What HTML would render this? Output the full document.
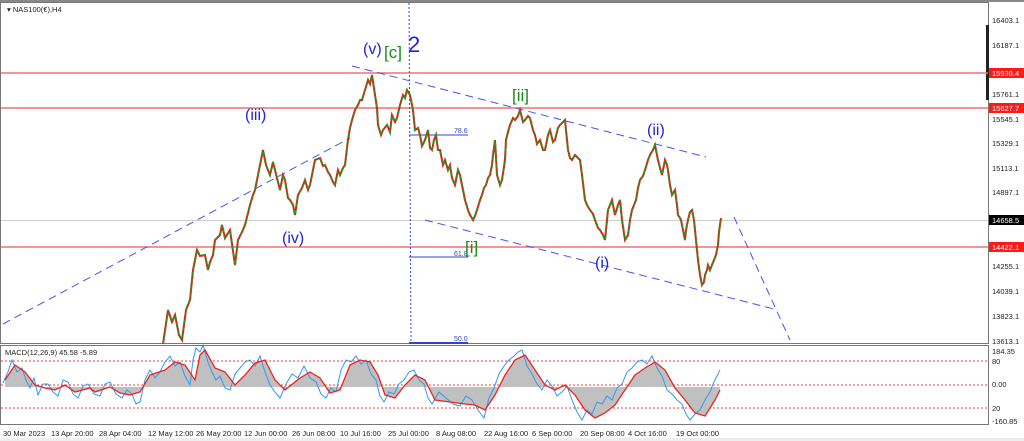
<!DOCTYPE html>
<html><head><meta charset="utf-8"><style>
html,body{margin:0;padding:0;background:#fff;width:1024px;height:441px;overflow:hidden}
svg{display:block;font-family:"Liberation Sans",sans-serif}
</style></head><body>
<svg width="1024" height="441" viewBox="0 0 1024 441">
<defs>
<polyline id="pr" fill="none" points="163,344 168,310 172,322 175,315 179,335 182,340 186,310 190,300 193,270 197,250 200,256 205,255 208,270 210,262 213,255 215,240 220,235 222,225 225,238 230,230 235,265 238,240 242,232 245,225 250,205 253,195 255,190 258,175 260,165 263,150 266,165 270,175 273,162 275,170 280,190 283,175 285,180 288,198 290,200 293,205 295,215 298,195 302,188 305,180 308,190 310,185 313,170 315,160 320,158 323,166 325,165 328,172 330,175 333,182 335,185 338,170 340,175 343,168 345,165 348,140 350,128 352,120 355,110 358,105 360,100 362,100 365,90 368,80 370,84 372,75 375,95 377,108 378,125 381,135 383,130 387,125 390,132 392,115 395,122 397,118 400,105 403,95 405,98 407,90 410,95 413,110 415,130 418,128 420,135 422,146 425,140 428,130 430,148 432,150 434,140 436,135 438,150 440,150 443,165 445,160 448,170 450,165 452,178 455,185 458,170 460,175 463,190 465,200 468,210 470,215 473,220 475,216 477,210 480,200 482,195 484,188 486,185 488,178 490,175 492,165 493,155 495,140 497,175 500,185 502,180 505,160 506,140 508,132 510,125 513,118 515,120 518,116 520,110 523,122 525,120 528,116 530,118 533,130 535,135 537,144 540,140 543,150 545,150 548,135 550,130 553,142 555,140 558,128 560,125 563,122 565,120 567,140 568,150 570,158 572,160 575,155 578,158 580,160 582,175 585,200 587,205 590,210 593,214 595,220 598,228 600,230 603,235 605,240 607,220 608,210 610,205 612,200 614,210 615,215 618,205 620,200 622,220 625,240 628,235 630,220 632,210 634,205 636,200 638,188 640,180 643,176 645,170 648,160 650,155 653,150 655,145 657,155 658,160 660,168 662,175 664,165 665,160 667,165 668,170 670,185 672,195 675,190 677,205 678,215 680,218 681,220 683,230 685,240 686,230 688,220 690,212 692,210 694,220 695,230 697,250 698,260 700,275 702,285 704,282 705,275 707,270 708,265 710,270 712,265 714,260 716,255 718,245 719,232 721,218"/>
</defs>
<rect width="1024" height="441" fill="#fff"/>
<rect x="0" y="0" width="1024" height="2" fill="#888"/>
<rect x="0.5" y="2.5" width="988" height="341" fill="none" stroke="#777"/>
<rect x="0.5" y="345.5" width="988" height="79" fill="none" stroke="#777"/>
<rect x="986" y="25" width="3" height="75" fill="#222"/>
<line x1="1" y1="73" x2="988" y2="73" stroke="#f07070" stroke-width="1.5"/>
<line x1="1" y1="108" x2="988" y2="108" stroke="#f07070" stroke-width="1.5"/>
<line x1="1" y1="247" x2="988" y2="247" stroke="#f07070" stroke-width="1.5"/>
<line x1="1" y1="220.5" x2="988" y2="220.5" stroke="#ccc"/>
<line x1="409" y1="3" x2="411" y2="344" stroke="#3344ee" stroke-dasharray="2 2"/>
<g stroke="#3344cc" stroke-width="1"><line x1="409" y1="135" x2="468" y2="135"/><line x1="409" y1="257" x2="468" y2="257"/><line x1="409" y1="343" x2="468" y2="343" stroke-width="2"/></g>
<g font-size="7" fill="#3344cc"><text x="454" y="133">78.6</text><text x="454" y="256">61.8</text><text x="454" y="341">50.0</text></g>
<g stroke="#4455ee" stroke-width="1" stroke-dasharray="8 5" fill="none">
<line x1="3" y1="324" x2="350" y2="138"/>
<line x1="352" y1="66" x2="706" y2="157"/>
<line x1="425" y1="220" x2="778" y2="310"/>
<line x1="734" y1="217" x2="790" y2="340"/>
</g>
<use href="#pr" stroke="#d8261a" stroke-width="2"/>
<use href="#pr" stroke="#1f9a1f" stroke-width="2" stroke-dasharray="3 4"/>
<g font-size="16" fill="#2222dd">
<text x="363" y="54">(v)</text>
<text x="245" y="120">(iii)</text>
<text x="282" y="243">(iv)</text>
<text x="647" y="135">(ii)</text>
<text x="595" y="268">(i)</text>
<text x="408" y="52" font-size="22">2</text>
</g>
<g font-size="17" fill="#1a8a1a">
<text x="384" y="58">[c]</text>
<text x="512" y="101">[ii]</text>
<text x="465" y="253">[i]</text>
</g>
<text x="7" y="12" font-size="7.5" fill="#222">▾ NAS100(€),H4</text>
<line x1="1" y1="361" x2="988" y2="361" stroke="#f04040" stroke-dasharray="2 2"/>
<line x1="1" y1="385" x2="988" y2="385" stroke="#f04040" stroke-dasharray="2 2"/>
<line x1="1" y1="408" x2="988" y2="408" stroke="#f04040" stroke-dasharray="2 2"/>
<polygon fill="#c0c0c0" points="5,387 5,380 15,365 25,372 35,385 45,388 55,390 65,385 75,392 90,388 95,392 110,387 120,393 130,395 140,392 150,375 165,370 175,362 185,365 195,380 200,355 205,350 215,368 225,372 235,385 245,375 255,363 265,360 275,380 285,390 300,378 310,372 320,378 330,393 340,390 350,365 360,360 370,362 378,375 385,395 395,398 405,385 415,375 425,380 435,400 450,402 465,404 475,405 485,410 495,395 505,375 515,360 525,355 535,370 545,385 555,390 565,385 575,395 585,410 595,418 605,413 615,405 625,390 635,375 645,368 655,362 665,370 675,388 685,400 695,413 705,416 715,400 720,390 720,387"/>
<polyline fill="none" stroke="#3399ee" stroke-width="1" points="3,383 8,372 12,360 17,372 22,368 26,380 30,388 34,378 38,395 43,384 48,384 53,392 58,396 63,380 68,382 73,394 78,398 83,386 88,384 94,394 100,396 105,384 110,382 116,394 122,398 127,390 132,394 136,404 140,402 145,380 150,370 155,378 160,372 165,362 170,356 175,366 180,362 185,376 190,385 193,360 196,348 200,352 203,345 208,362 212,372 216,380 220,376 225,388 230,390 235,374 240,368 245,362 250,360 255,366 260,356 265,372 270,385 275,392 280,398 286,384 292,374 298,378 304,366 310,378 316,382 321,394 326,398 331,388 336,392 341,370 346,360 351,362 356,356 361,364 366,360 371,374 376,380 380,396 384,402 389,392 394,394 399,384 404,380 409,372 414,370 419,380 424,384 428,398 432,404 439,392 446,398 453,404 460,406 466,396 472,400 478,410 484,418 489,398 494,388 499,374 504,366 509,360 514,356 518,352 522,350 527,366 532,374 537,384 542,390 547,380 552,386 557,396 562,392 567,386 572,400 577,412 582,420 587,410 592,414 597,402 602,404 607,396 612,400 617,388 622,384 627,372 632,368 637,362 642,360 647,364 652,356 657,368 662,376 667,390 672,394 677,400 682,404 686,414 690,420 695,414 700,410 705,400 710,392 713,384 716,378 720,370"/>
<polyline fill="none" stroke="#ee2222" stroke-width="1.3" points="5,380 15,365 25,372 35,385 45,388 55,390 65,385 75,392 90,388 95,392 110,387 120,393 130,395 140,392 150,375 165,370 175,362 185,365 195,380 200,355 205,350 215,368 225,372 235,385 245,375 255,363 265,360 275,380 285,390 300,378 310,372 320,378 330,393 340,390 350,365 360,360 370,362 378,375 385,395 395,398 405,385 415,375 425,380 435,400 450,402 465,404 475,405 485,410 495,395 505,375 515,360 525,355 535,370 545,385 555,390 565,385 575,395 585,410 595,418 605,413 615,405 625,390 635,375 645,368 655,362 665,370 675,388 685,400 695,413 705,416 715,400 720,390"/>
<text x="5" y="355" font-size="7.5" fill="#222">MACD(12,26,9) 45.58 -5.89</text>
<g font-size="7.5" fill="#222">
<text x="992" y="23">16403.1</text><text x="992" y="48">16187.1</text>
<text x="992" y="97">15761.1</text><text x="992" y="122">15545.1</text>
<text x="992" y="146">15329.1</text><text x="992" y="171">15113.1</text>
<text x="992" y="195">14897.1</text><text x="992" y="269">14255.1</text>
<text x="992" y="294">14039.1</text><text x="992" y="319">13823.1</text>
<text x="992" y="344">13613.1</text>
<text x="992" y="354">184.35</text><text x="992" y="364">80</text>
<text x="992" y="387">0.00</text><text x="992" y="411">20</text>
<text x="992" y="424">-160.85</text>
</g>
<g font-size="7.5">
<rect x="989" y="68" width="35" height="10" fill="#ff1a1a"/><text x="992" y="76" fill="#fff">15939.4</text>
<rect x="989" y="103" width="35" height="10" fill="#ff1a1a"/><text x="992" y="111" fill="#fff">15627.7</text>
<rect x="989" y="215" width="35" height="10" fill="#000"/><text x="992" y="223" fill="#fff">14658.5</text>
<rect x="989" y="242" width="35" height="10" fill="#ff1a1a"/><text x="992" y="250" fill="#fff">14422.1</text>
</g>
<g font-size="7.5" fill="#222">
<text x="3" y="436">30 Mar 2023</text><text x="51" y="436">13 Apr 20:00</text>
<text x="99" y="436">28 Apr 04:00</text><text x="148" y="436">12 May 12:00</text>
<text x="196" y="436">26 May 20:00</text><text x="244" y="436">12 Jun 00:00</text>
<text x="292" y="436">26 Jun 08:00</text><text x="340" y="436">10 Jul 16:00</text>
<text x="388" y="436">25 Jul 00:00</text><text x="436" y="436">8 Aug 08:00</text>
<text x="484" y="436">22 Aug 16:00</text><text x="532" y="436">6 Sep 00:00</text>
<text x="580" y="436">20 Sep 08:00</text><text x="628" y="436">4 Oct 16:00</text>
<text x="676" y="436">19 Oct 00:00</text>
</g>
<rect x="0" y="438" width="1024" height="3" fill="#eee"/>
</svg>
</body></html>
